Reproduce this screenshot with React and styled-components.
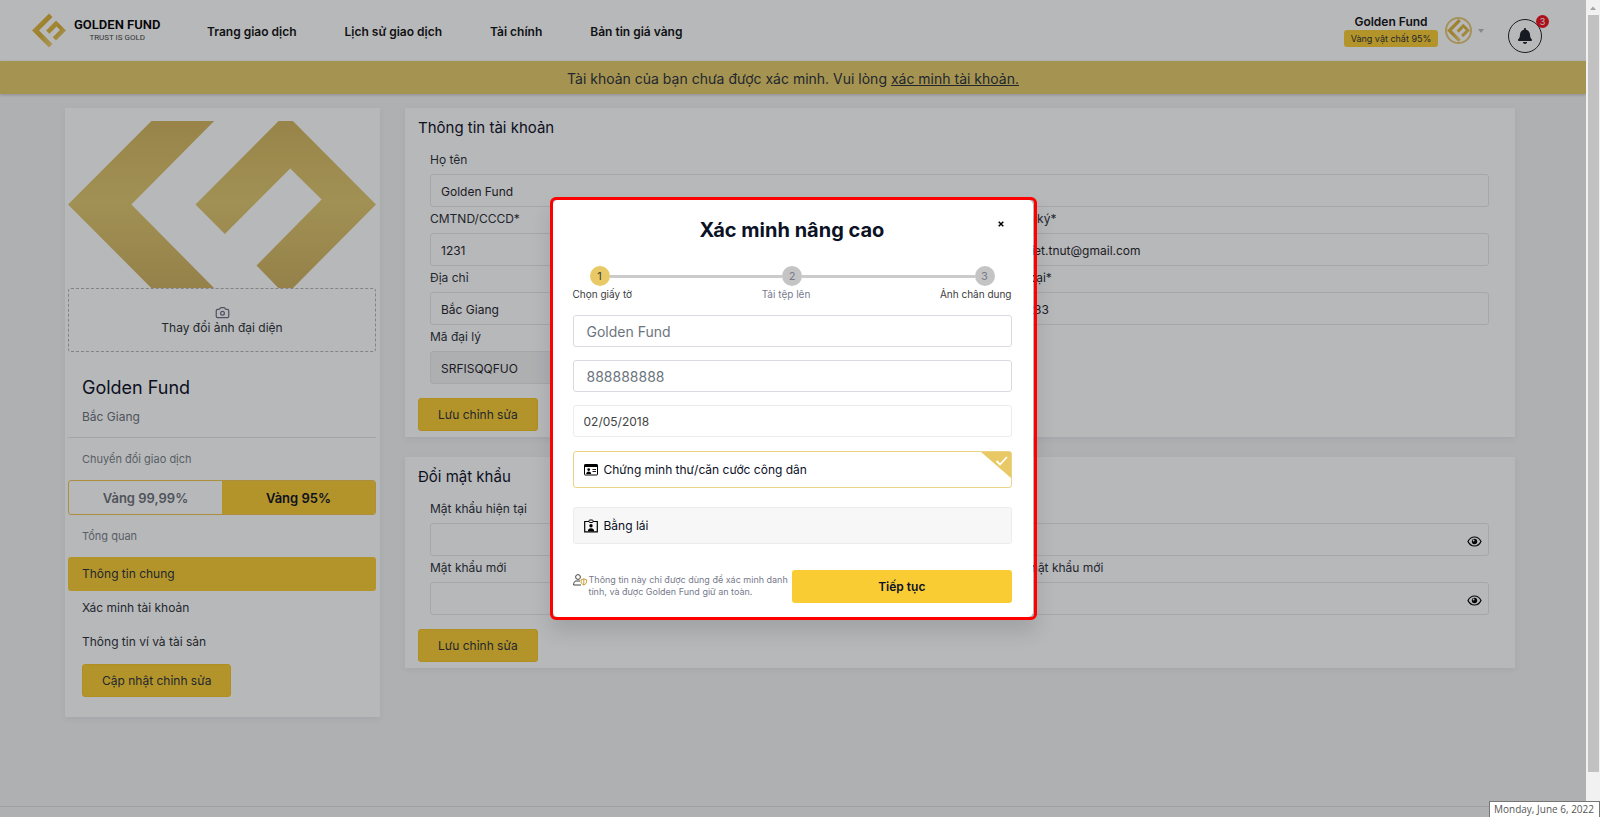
import React, { useState } from 'react';
import styled, { createGlobalStyle } from 'styled-components';
import { FaBell } from 'react-icons/fa';
import { Camera } from 'lucide-react';

const GlobalStyle = createGlobalStyle`
  * {
    box-sizing: border-box;
  }

  body {
    margin: 0;
    font-family: Inter, "Open Sans", sans-serif;
    font-size: 13px;
    color: #2b2f36;
    background: #f4f4f4;
  }

  button,
  input {
    font-family: inherit;
  }

  h1,
  h2,
  p {
    margin: 0;
  }
`;

const LogoMark = () => (
    <svg viewBox="55 -150 923 926" aria-hidden="true">
        <defs>
            <linearGradient id="mark" x1="0" y1="0" x2="1" y2="1">
                <stop offset="0" stopColor="#eec44c" />
                <stop offset="0.5" stopColor="#d9b035" />
                <stop offset="1" stopColor="#f0d478" />
            </linearGradient>
        </defs>
        <path fill="url(#mark)" d="M518-150 613-55 245 313 613 681 518 776 55 313Z" />
        <path fill="url(#mark)" d="M707 42 978 313 707 584 620 496 815 298 721 205 525 402 437 313Z" />
    </svg>
);

const AvatarArt = () => (
    <svg viewBox="55 63 923 501" role="img" aria-label="Golden Fund">
        <defs>
            <linearGradient id="gold" gradientUnits="userSpaceOnUse" x1="0" y1="63" x2="0" y2="564">
                <stop offset="0" stopColor="#d3b55d" />
                <stop offset="0.48" stopColor="#e0c76d" />
                <stop offset="1" stopColor="#ceb15e" />
            </linearGradient>
        </defs>
        <path fill="url(#gold)" d="M305 63H493L245 313 493 564H305L55 313Z" />
        <path fill="url(#gold)" d="M686 63H729L978 313 729 564H686L620 496 815 298 721 205 525 402 437 313Z" />
    </svg>
);

const EyeIcon = () => (
    <svg width="15" height="11" viewBox="0 0 15 11" fill="none" aria-hidden="true">
        <path d="M1 5.5C2.4 2.6 4.7 1 7.5 1s5.1 1.6 6.5 4.5C12.6 8.4 10.3 10 7.5 10S2.4 8.4 1 5.5Z" stroke="#000" strokeWidth="1.2" />
        <circle cx="7.500" cy="5.500" r="2.700" fill="#000" />
        <circle cx="6.600" cy="4.500" r="0.900" fill="#fff" />
    </svg>
);

const IdCardIcon = () => (
    <svg width="14" height="12" viewBox="0 0 14 12" aria-hidden="true">
        <path d="M1.2.5h11.6a.7.7 0 0 1 .7.7v9.100a.7.7 0 0 1-.7.7H1.200a.7.7 0 0 1-.7-.7V1.200a.7.7 0 0 1 .7-.7Z" fill="#fff" stroke="#000" />
        <path d="M.5.500h13V3H.5z" fill="#000" />
        <circle cx="4.700" cy="5.600" r="1.400" fill="#000" />
        <path d="M2.200 10c0-1.600 1-2.500 2.500-2.500S7.200 8.400 7.200 10Z" fill="#000" />
        <path d="M8.500 5.500h3.500M8.500 7.500h3.500" stroke="#000" strokeWidth="0.900" />
    </svg>
);

const BadgeIcon = () => (
    <svg width="14" height="14" viewBox="0 0 14 14" aria-hidden="true">
        <path d="M5 2.500H.7v10.300h12.600V2.500H9" fill="none" stroke="#000" strokeWidth="1.200" />
        <rect x="5" y="1" width="4" height="2.500" rx="0.800" fill="none" stroke="#000" />
        <circle cx="7" cy="6.800" r="1.700" fill="#000" />
        <path d="M3.800 12.300c.1-2 1.300-3 3.200-3s3.100 1 3.200 3Z" fill="#000" />
    </svg>
);

const SafeUserIcon = () => (
    <svg width="14" height="12" viewBox="0 0 14 12" fill="none" aria-hidden="true">
        <circle cx="5" cy="3" r="2.400" stroke="#444" />
        <path d="M7 7H3C1.500 7 .7 8.300.6 11H8" stroke="#444" />
        <path d="m10.800 4.800 2.700 1v2c0 1.500-1 2.400-2.700 3.200C9.100 10.200 8.100 9.300 8.100 7.800v-2Z" stroke="#c79a2c" />
        <path d="M10.800 5v6" stroke="#c79a2c" />
    </svg>
);

const FormField = ({ id, label, wide, secret, ...rest }) => {
    const [visible, setVisible] = useState(false);

    return (
        <Field $wide={wide}>
            <label htmlFor={id}>{label}</label>
            <InputBox>
                <input id={id} type={secret && !visible ? 'password' : 'text'} {...rest} />
                {secret && (
                    <EyeButton type="button" aria-label={label} onClick={() => setVisible(!visible)}>
                        <EyeIcon />
                    </EyeButton>
                )}
            </InputBox>
        </Field>
    );
};

const App = () => {
    const [doc, setDoc] = useState('id');
    const [market, setMarket] = useState('95');

    return (
        <Shell>
            <GlobalStyle />
            <Page>
                <Header>
                    <Brand href="#">
                        <LogoMark />
                        <BrandText>
                            <strong>GOLDEN FUND</strong>
                            <span>TRUST IS GOLD</span>
                        </BrandText>
                    </Brand>
                    <Nav>
                        <a href="#">Trang giao dịch</a>
                        <a href="#">Lịch sử giao dịch</a>
                        <a href="#">Tài chính</a>
                        <a href="#">Bản tin giá vàng</a>
                    </Nav>
                    <Account>
                        <AccountName>
                            <strong>Golden Fund</strong>
                            <span>Vàng vật chất 95%</span>
                        </AccountName>
                        <AccountButton type="button" aria-label="Golden Fund">
                            <RoundLogo><LogoMark /></RoundLogo>
                            <Caret />
                        </AccountButton>
                        <BellButton type="button" aria-label="3">
                            <FaBell size={16} />
                            <Count>3</Count>
                        </BellButton>
                    </Account>
                </Header>
                <Banner>
                    Tài khoản của bạn chưa được xác minh. Vui lòng <a href="#">xác minh tài khoản.</a>
                </Banner>

                <Content>
                    <Sidebar>
                        <AvatarArt />
                        <UploadButton type="button">
                            <Camera size={15} strokeWidth={2} color="#6b6f82" />
                            Thay đổi ảnh đại diện
                        </UploadButton>
                        <ProfileName>Golden Fund</ProfileName>
                        <ProfilePlace>Bắc Giang</ProfilePlace>
                        <GroupTitle>Chuyển đổi giao dịch</GroupTitle>
                        <Switch>
                            <SwitchButton type="button" $on={market === '99'} onClick={() => setMarket('99')}>
                                Vàng 99,99%
                            </SwitchButton>
                            <SwitchButton type="button" $on={market === '95'} onClick={() => setMarket('95')}>
                                Vàng 95%
                            </SwitchButton>
                        </Switch>
                        <GroupTitle>Tổng quan</GroupTitle>
                        <SideLink href="#" $active>Thông tin chung</SideLink>
                        <SideLink href="#">Xác minh tài khoản</SideLink>
                        <SideLink href="#">Thông tin ví và tài sản</SideLink>
                        <UpdateButton type="button">Cập nhật chỉnh sửa</UpdateButton>
                    </Sidebar>

                    <Main>
                        <Card>
                            <CardTitle>Thông tin tài khoản</CardTitle>
                            <Fields>
                                <FormField id="name" label="Họ tên" defaultValue="Golden Fund" wide />
                                <FormField id="card" label="CMTND/CCCD*" defaultValue="1231" />
                                <FormField id="email" label="Email đăng ký*" defaultValue="nguyenviet.tnut@gmail.com" />
                                <FormField id="address" label="Địa chỉ" defaultValue="Bắc Giang" />
                                <FormField id="phone" label="Số điện thoại*" defaultValue="0911512283" />
                                <FormField id="agent" label="Mã đại lý" defaultValue="SRFISQQFUO" disabled />
                            </Fields>
                            <GoldButton type="button">Lưu chỉnh sửa</GoldButton>
                        </Card>
                        <Card>
                            <CardTitle>Đổi mật khẩu</CardTitle>
                            <Fields>
                                <FormField id="current" label="Mật khẩu hiện tại" wide secret />
                                <FormField id="next" label="Mật khẩu mới" secret />
                                <FormField id="repeat" label="Xác nhận mật khẩu mới" secret />
                            </Fields>
                            <GoldButton type="button">Lưu chỉnh sửa</GoldButton>
                        </Card>
                    </Main>
                </Content>
                <PageFoot />
            </Page>

            <Backdrop>
                <Frame>
                    <Modal role="dialog" aria-labelledby="verify-title">
                        <ModalTitle id="verify-title">Xác minh nâng cao</ModalTitle>
                        <CloseButton type="button" aria-label="×">
                            <svg width="6" height="6" viewBox="0 0 6 6" aria-hidden="true">
                                <path d="m.7.700 4.600 4.600m0-4.600L.7 5.300" stroke="#000" strokeWidth="1.500" />
                            </svg>
                        </CloseButton>
                        <Track>
                            <Dot $active>1</Dot>
                            <Line />
                            <Dot>2</Dot>
                            <Line />
                            <Dot>3</Dot>
                        </Track>
                        <StepNames>
                            <span>Chọn giấy tờ</span>
                            <StepMuted>Tải tệp lên</StepMuted>
                            <span>Ảnh chân dung</span>
                        </StepNames>
                        <ModalFields>
                            <ModalInput aria-label="Họ tên" defaultValue="Golden Fund" />
                            <ModalInput aria-label="CMTND/CCCD" defaultValue="888888888" />
                            <ModalInput aria-label="02/05/2018" defaultValue="02/05/2018" $date />
                        </ModalFields>
                        <Option $on={doc === 'id'}>
                            <input type="radio" name="doc" checked={doc === 'id'} onChange={() => setDoc('id')} />
                            <IdCardIcon />
                            Chứng minh thư/căn cước công dân
                            {doc === 'id' && <Ticked />}
                        </Option>
                        <Option $on={doc === 'licence'}>
                            <input type="radio" name="doc" checked={doc === 'licence'} onChange={() => setDoc('licence')} />
                            <BadgeIcon />
                            Bằng lái
                            {doc === 'licence' && <Ticked />}
                        </Option>
                        <ModalFoot>
                            <Note>
                                <SafeUserIcon />
                                <p>Thông tin này chỉ được dùng để xác minh danh tính, và được Golden Fund giữ an toàn.</p>
                            </Note>
                            <NextButton type="button">Tiếp tục</NextButton>
                        </ModalFoot>
                    </Modal>
                </Frame>
            </Backdrop>

            <Scrollbar>
                <svg width="14" height="15" viewBox="0 0 14 15" aria-hidden="true">
                    <path d="M4 10 7 6.500 10 10Z" fill="#a3a3a3" />
                </svg>
                <Thumb />
            </Scrollbar>
            <DateTip>Monday, June 6, 2022</DateTip>
        </Shell>
    );
};

const Ticked = () => (
    <TickCorner width="30" height="26" viewBox="0 0 30 26" aria-hidden="true">
        <path d="M0 0h30v26Z" fill="#e8c965" />
        <path d="m15.500 9 3.500 3.500L26 5" fill="none" stroke="#fff" strokeWidth="1.800" />
    </TickCorner>
);

const Shell = styled.div`
  display: grid;
  grid-template-columns: 1fr 14px;
  min-height: 100vh;
`;

const Page = styled.div`
  display: flex;
  flex-direction: column;
  min-width: 0;
`;

const Header = styled.header`
  display: flex;
  align-items: center;
  height: 61px;
  padding: 0 44px 0 32px;
  background: #fff;
`;

const Brand = styled.a`
  display: flex;
  align-items: center;
  gap: 8px;
  width: 175px;
  color: #000;
  text-decoration: none;

  svg {
    width: 34px;
    height: 35px;
  }
`;

const BrandText = styled.span`
  display: flex;
  flex-direction: column;
  align-items: center;
  font-family: Roboto, "Liberation Sans", sans-serif;

  strong {
    font-size: 13px;
    font-weight: 600;
    line-height: 14px;
  }

  span {
    font-size: 8px;
    line-height: 11px;
    color: #444;
  }
`;

const Nav = styled.nav`
  display: flex;
  gap: 48px;
  padding-top: 3px;

  a {
    font-size: 12px;
    font-weight: 600;
    line-height: 20px;
    color: #111;
    text-decoration: none;
  }
`;

const Account = styled.div`
  display: flex;
  align-items: center;
  margin-left: auto;
`;

const AccountName = styled.div`
  display: flex;
  flex-direction: column;
  align-items: center;

  strong {
    font-size: 12px;
    font-weight: 600;
    line-height: 15px;
    color: #111;
  }

  span {
    width: 94px;
    margin-top: 1px;
    border-radius: 3px;
    background: #f9cc33;
    font-size: 9px;
    line-height: 17px;
    text-align: center;
  }
`;

const AccountButton = styled.button`
  display: flex;
  align-items: center;
  gap: 6px;
  margin: 0 24px 0 7px;
  padding: 0;
  border: 0;
  background: none;
`;

const RoundLogo = styled.span`
  display: flex;
  align-items: center;
  justify-content: center;
  width: 27px;
  height: 27px;
  border: 2px solid #e6c876;
  border-radius: 50%;

  svg {
    width: 23px;
    height: 23px;
  }
`;

const Caret = styled.span`
  border: 3px solid transparent;
  border-top: 4px solid #bbb;
  border-bottom: 0;
`;

const BellButton = styled.button`
  position: relative;
  display: flex;
  align-items: center;
  justify-content: center;
  width: 34px;
  height: 34px;
  margin-top: 10px;
  padding: 0;
  border: 1px solid #222;
  border-radius: 50%;
  background: none;
  color: #1a1d24;
`;

const Count = styled.span`
  position: absolute;
  top: -5px;
  right: -8px;
  width: 13px;
  height: 13px;
  border-radius: 50%;
  background: #f0101c;
  color: #fff;
  font-size: 9px;
  line-height: 13px;
  text-align: center;
`;

const Banner = styled.div`
  padding: 7px 0 5px;
  background: #e6cb6a;
  box-shadow: 0 1px 3px rgba(0, 0, 0, 0.2);
  font-size: 14px;
  line-height: 21px;
  text-align: center;

  a {
    color: inherit;
  }
`;

const Content = styled.div`
  display: grid;
  grid-template-columns: 315px 1fr;
  align-items: start;
  gap: 25px;
  flex: 1;
  padding: 14px 71px 0 65px;
`;

const Sidebar = styled.aside`
  display: flex;
  flex-direction: column;
  padding: 13px 4px 20px 3px;
  background: #fff;
  box-shadow: 0 2px 6px rgba(60, 60, 90, 0.08);
`;

const UploadButton = styled.button`
  display: flex;
  flex-direction: column;
  align-items: center;
  justify-content: center;
  height: 64px;
  padding: 0;
  border: 1px dashed #b4b4b4;
  border-radius: 3px;
  background: none;
  font-size: 12px;
  line-height: 15px;
  color: #2b2f36;
`;

const ProfileName = styled.h1`
  margin-top: 22px;
  padding-left: 14px;
  font-size: 18px;
  font-weight: 400;
  line-height: 28px;
  color: #0c0f1f;
`;

const ProfilePlace = styled.p`
  padding: 5px 14px 10px;
  border-bottom: 1px solid #e4e4e6;
  font-size: 12px;
  line-height: 20px;
  color: #6b7078;
`;

const GroupTitle = styled.h2`
  padding-left: 14px;
  font-size: 11px;
  font-weight: 400;
  line-height: 42px;
  color: #7a7f86;
`;

const Switch = styled.div`
  display: flex;
  overflow: hidden;
  border: 1px solid #f0c350;
  border-radius: 3px;
`;

const SwitchButton = styled.button`
  flex: 1;
  height: 33px;
  padding: 0;
  border: 0;
  background: ${(props) => (props.$on ? '#f9cc33' : 'transparent')};
  font-size: 13px;
  font-weight: 600;
  color: ${(props) => (props.$on ? '#0c0f1f' : '#6b7078')};
`;

const SideLink = styled.a`
  padding: 0 14px;
  border-radius: 3px;
  background: ${(props) => (props.$active ? '#f9cc33' : 'transparent')};
  font-size: 12px;
  line-height: 34px;
  color: #2b2f36;
  text-decoration: none;
`;

const GoldButton = styled.button`
  height: 33px;
  margin-top: 14px;
  padding: 0 19px;
  border: 1px solid #f5c322;
  border-radius: 3px;
  background: #f9cc33;
  font-size: 12px;
  color: #2b2f36;
`;

const UpdateButton = styled(GoldButton)`
  align-self: flex-start;
  margin: 5px 0 0 14px;
`;

const Main = styled.main`
  display: flex;
  flex-direction: column;
  gap: 20px;
  min-width: 0;
`;

const Card = styled.section`
  padding: 0 13px 6px;
  background: #fff;
  box-shadow: 0 2px 6px rgba(60, 60, 90, 0.08);
`;

const CardTitle = styled.h2`
  font-size: 15px;
  font-weight: 400;
  line-height: 40px;
  color: #0c0f1f;
`;

const Fields = styled.div`
  display: grid;
  grid-template-columns: 1fr 1fr;
  column-gap: 24px;
  padding: 0 13px 0 12px;
`;

const Field = styled.div`
  grid-column: ${(props) => (props.$wide ? '1 / -1' : 'auto')};
  min-width: 0;

  label {
    display: block;
    margin-bottom: 2px;
    font-size: 12px;
    line-height: 24px;
  }
`;

const InputBox = styled.div`
  position: relative;

  input {
    display: block;
    width: 100%;
    height: 33px;
    padding: 2px 10px 0;
    border: 1px solid #e6e7e9;
    border-radius: 3px;
    background: transparent;
    font-size: 12px;
    color: #1f2329;
  }

  input:disabled {
    background: #f2f2f3;
  }
`;

const EyeButton = styled.button`
  position: absolute;
  top: 0;
  right: 7px;
  display: flex;
  align-items: center;
  height: 36px;
  padding: 0;
  border: 0;
  background: none;
`;

const PageFoot = styled.footer`
  height: 11px;
  border-top: 1px solid #ddd;
`;

const Backdrop = styled.div`
  position: fixed;
  inset: 0 14px 0 0;
  display: flex;
  align-items: center;
  justify-content: center;
  background: rgba(18, 20, 26, 0.3);
`;

const Frame = styled.div`
  width: 487px;
  padding-right: 1px;
  border: 3px solid #f00;
  border-radius: 6px;
  box-shadow: 0 12px 20px rgba(0, 0, 0, 0.12);
`;

const Modal = styled.div`
  position: relative;
  display: flex;
  flex-direction: column;
  padding: 15px 21px 14px 20px;
  border-radius: 5px;
  background: #fff;
`;

const ModalTitle = styled.h1`
  font-size: 20px;
  font-weight: 700;
  line-height: 30px;
  text-align: center;
  color: #0c1226;
`;

const CloseButton = styled.button`
  position: absolute;
  top: 14px;
  right: 22px;
  display: flex;
  align-items: center;
  justify-content: center;
  width: 20px;
  height: 20px;
  padding: 0;
  border: 0;
  background: none;
`;

const Track = styled.div`
  display: flex;
  align-items: center;
  margin-top: 21px;
  padding: 0 17px;
`;

const Dot = styled.span`
  width: 20px;
  height: 20px;
  border-radius: 50%;
  background: ${(props) => (props.$active ? '#e8c965' : '#c4c4c4')};
  color: ${(props) => (props.$active ? '#3c3c3c' : '#777a8c')};
  font-size: 11px;
  line-height: 20px;
  text-align: center;
`;

const Line = styled.span`
  flex: 1;
  height: 3px;
  background: #cbcbcb;
`;

const StepNames = styled.div`
  display: flex;
  justify-content: space-between;
  margin-bottom: 13px;
  font-size: 10px;
  line-height: 16px;
  color: #3c3c3c;
`;

const StepMuted = styled.span`
  color: #777a8c;
`;

const ModalFields = styled.div`
  display: flex;
  flex-direction: column;
  gap: 13px;
  margin-bottom: 14px;
`;

const ModalInput = styled.input`
  width: 100%;
  height: 32px;
  padding: 1px ${(props) => (props.$date ? 10 : 13)}px 0;
  border: 1px solid ${(props) => (props.$date ? '#ececec' : '#d8dbe2')};
  border-radius: 3px;
  font-size: ${(props) => (props.$date ? 12 : 14)}px;
  color: ${(props) => (props.$date ? '#444' : '#6c757d')};
`;

const Option = styled.label`
  position: relative;
  display: flex;
  align-items: center;
  gap: 6px;
  height: 37px;
  margin-bottom: 19px;
  padding: 0 10px;
  border: 1px solid ${(props) => (props.$on ? '#ecd486' : '#ececec')};
  border-radius: 3px;
  background: ${(props) => (props.$on ? '#fff' : '#f7f7f7')};
  font-size: 12px;
  color: #0c0f1f;

  input {
    position: absolute;
    opacity: 0;
  }
`;

const TickCorner = styled.svg`
  position: absolute;
  top: 0;
  right: 0;
`;

const ModalFoot = styled.div`
  display: grid;
  grid-template-columns: 1fr 1fr;
  margin-top: 7px;
`;

const Note = styled.div`
  display: flex;
  gap: 2px;
  padding-top: 4px;
  font-size: 9px;
  line-height: 12px;
  color: #777a8c;

  svg {
    flex: none;
  }
`;

const NextButton = styled.button`
  height: 33px;
  padding: 0;
  border: 0;
  border-radius: 3px;
  background: #f9cc33;
  font-size: 12px;
  font-weight: 600;
  color: #0c1226;
`;

const Scrollbar = styled.div`
  position: sticky;
  top: 0;
  display: flex;
  flex-direction: column;
  align-items: center;
  height: 100vh;
  padding-bottom: 45px;
  background: #f1f1f1;
`;

const Thumb = styled.div`
  flex: 1;
  width: 11px;
  background: #c1c1c1;
`;

const DateTip = styled.div`
  position: fixed;
  right: 0;
  bottom: 0;
  padding: 0 5px 0 4px;
  border: 1px solid #767676;
  border-bottom: 0;
  background: #fff;
  font-family: "Open Sans", sans-serif;
  font-size: 10px;
  line-height: 15px;
  color: #575757;
`;

export default App;
